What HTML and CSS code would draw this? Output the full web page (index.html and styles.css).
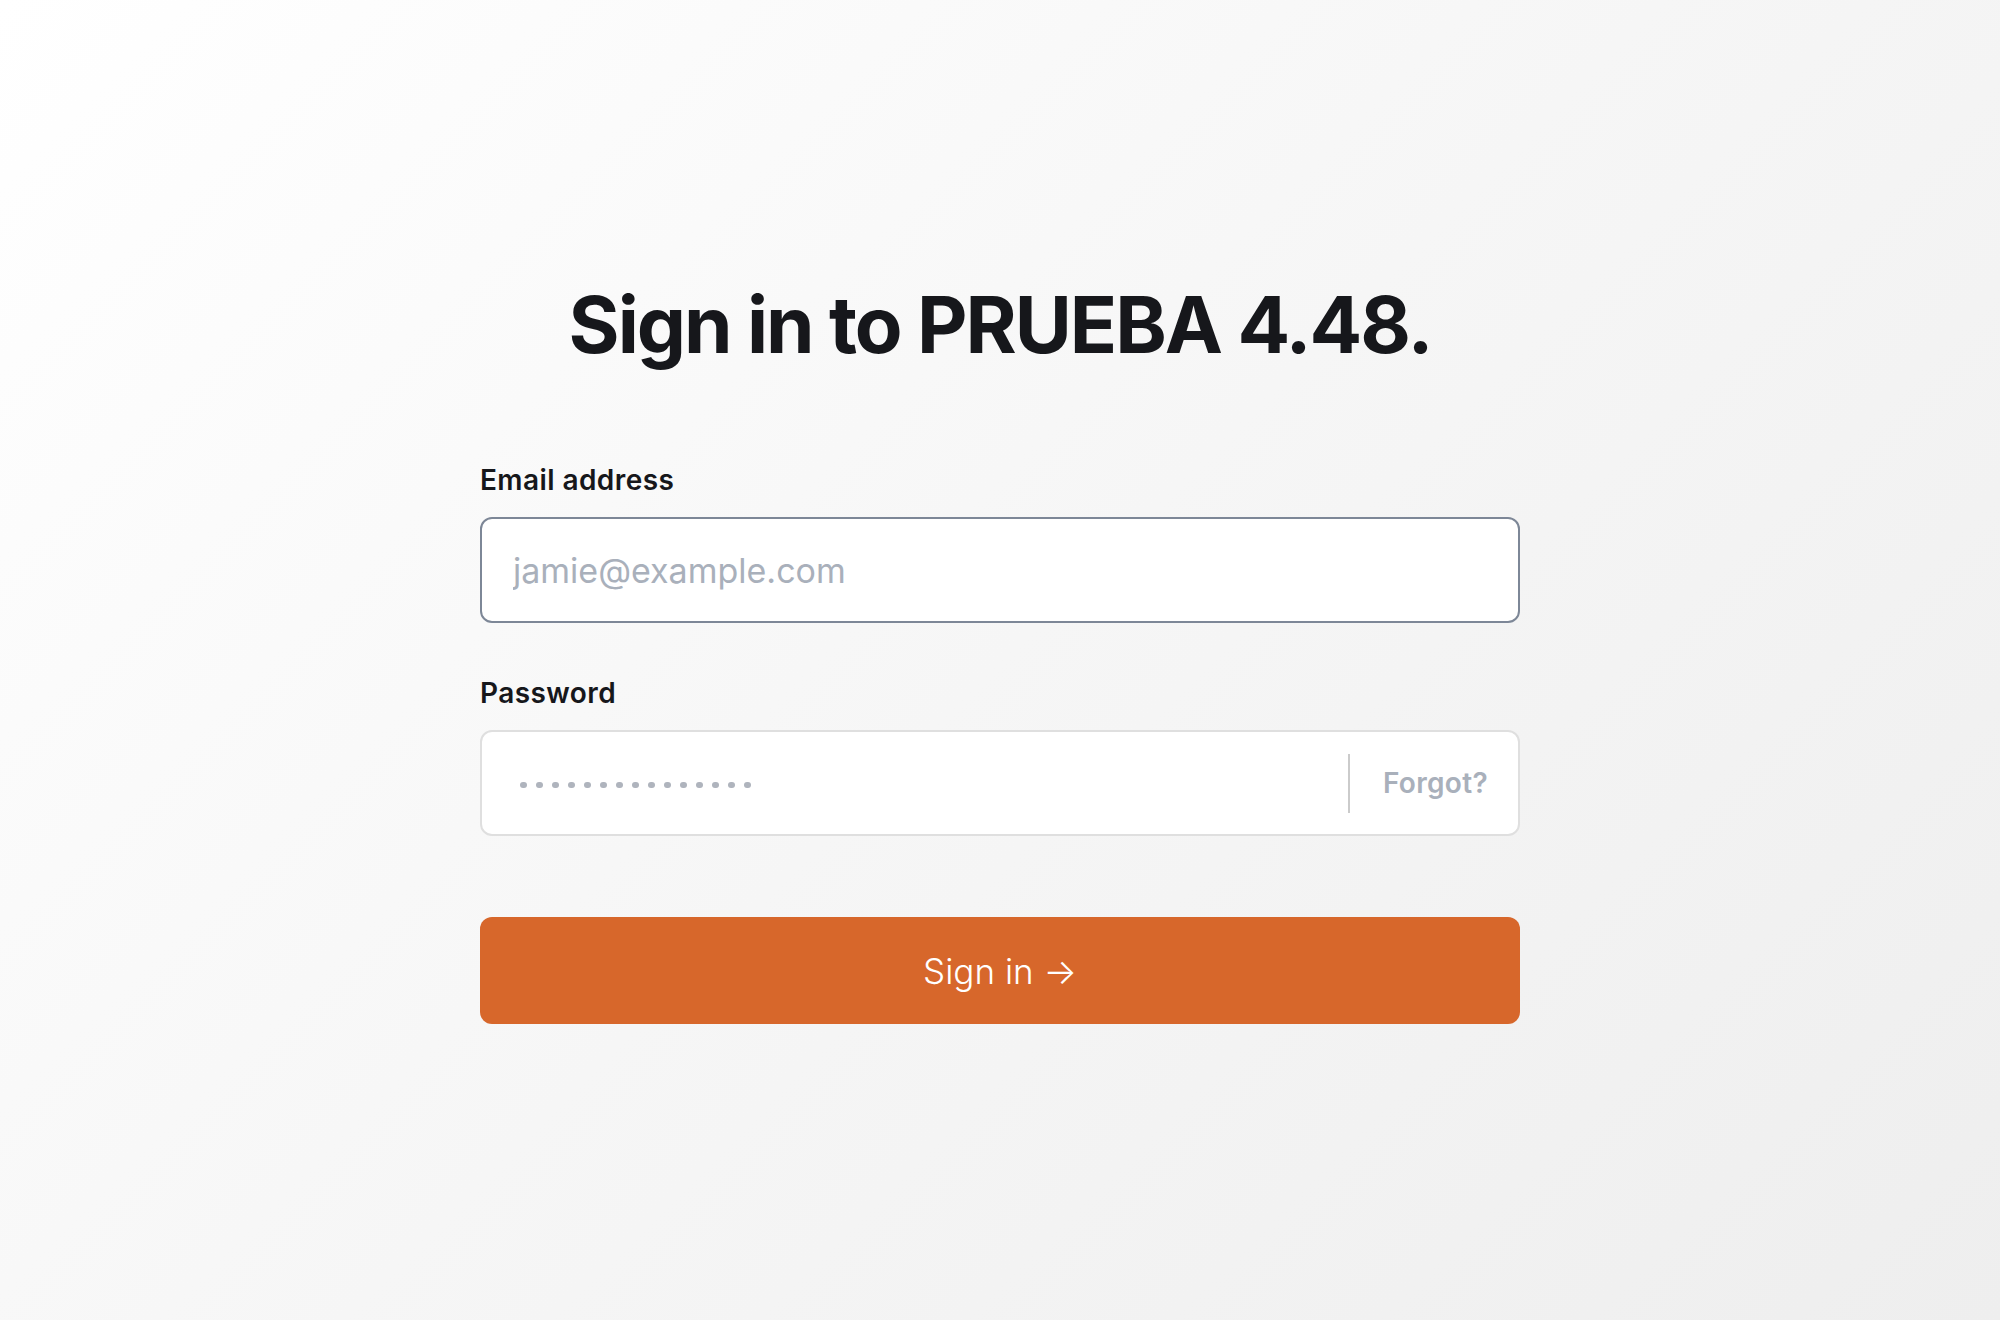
FILE: index.html
```html
<!DOCTYPE html>
<html lang="en">
<head>
<meta charset="utf-8">
<title>Sign in to PRUEBA 4.48.</title>
<link rel="stylesheet" href="styles.css">
</head>
<body>
<main class="page">
  <form class="signin" onsubmit="return false">
    <h1 class="title">Sign in to PRUEBA 4.48.</h1>

    <label class="label" for="email">Email address</label>
    <input class="field field-email" id="email" type="email" placeholder="jamie@example.com">

    <label class="label label-password" for="password">Password</label>
    <div class="field field-password" id="password">
      <div class="dots">
        <span class="dot"></span><span class="dot"></span><span class="dot"></span><span class="dot"></span><span class="dot"></span>
        <span class="dot"></span><span class="dot"></span><span class="dot"></span><span class="dot"></span><span class="dot"></span>
        <span class="dot"></span><span class="dot"></span><span class="dot"></span><span class="dot"></span><span class="dot"></span>
      </div>
      <span class="divider"></span>
      <a class="forgot" href="#">Forgot?</a>
    </div>

    <button class="submit" type="submit">Sign in <span class="arrow">→</span></button>
  </form>
</main>
</body>
</html>
```

FILE: styles.css
```css
html, body {
  margin: 0;
  padding: 0;
}

body {
  min-height: 100vh;
  background: linear-gradient(135deg, #ffffff 0%, #f6f6f6 50%, #eeeeee 100%);
  font-family: Inter, "Noto Sans", "Liberation Sans", sans-serif;
  color: #16171b;
}

.page {
  display: flex;
  justify-content: center;
  padding-top: 286px;
}

.signin {
  width: 1040px;
  display: flex;
  flex-direction: column;
}

.title {
  margin: 0;
  font-size: 78px;
  line-height: 78px;
  font-weight: 700;
  letter-spacing: -0.026em;
  text-align: center;
  color: #16171b;
}

.label {
  display: block;
  margin-top: 99px;
  font-size: 28px;
  line-height: 34px;
  font-weight: 600;
  letter-spacing: 0.015em;
  color: #16171b;
}

.label-password {
  margin-top: 53px;
}

.field {
  box-sizing: border-box;
  height: 106px;
  margin-top: 20px;
  border-radius: 12px;
  background: #ffffff;
  font-family: Inter, "Noto Sans", "Liberation Sans", sans-serif;
}

.field-email {
  width: 100%;
  border: 2px solid #7d8797;
  padding: 0 31px;
  font-size: 34px;
  color: #16171b;
  outline: none;
}

.field-email::placeholder {
  color: #a9b0bb;
  font-weight: 400;
}

.field-password {
  display: flex;
  align-items: center;
  border: 2px solid #dfdfdf;
  padding: 0 30px 0 38px;
}

.dots {
  flex: 1;
  display: flex;
  gap: 9.5px;
  margin-top: 4px;
}

.dot {
  width: 6.5px;
  height: 6.5px;
  border-radius: 50%;
  background: #afb4bd;
}

.divider {
  width: 2px;
  height: 59px;
  background: #cbcbcb;
  margin-right: 33px;
}

.forgot {
  font-size: 28px;
  font-weight: 600;
  color: #a9b0bb;
  text-decoration: none;
  letter-spacing: 0.012em;
}

.submit {
  margin-top: 81px;
  height: 107px;
  border: none;
  border-radius: 12px;
  background: #d7672b;
  color: #ffffff;
  font-family: Inter, "Noto Sans", "Liberation Sans", sans-serif;
  font-size: 35px;
  font-weight: 300;
  cursor: pointer;
}

.arrow {
  font-weight: 300;
}
```
